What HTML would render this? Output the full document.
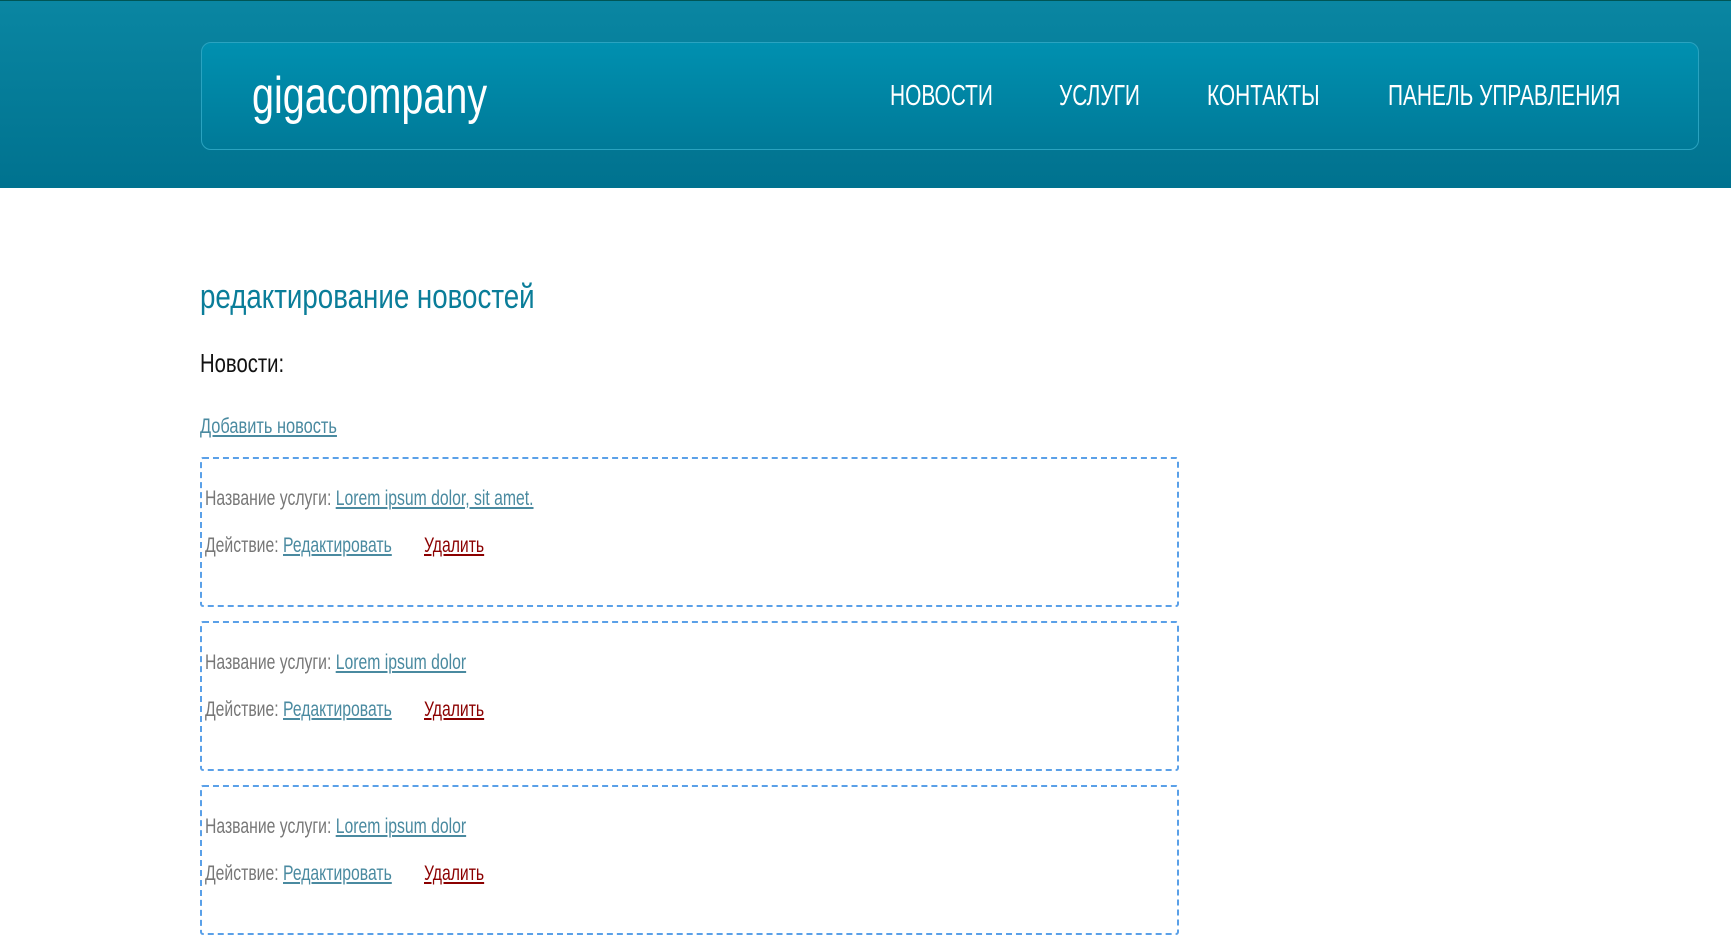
<!DOCTYPE html>
<html><head><meta charset="utf-8"><style>
body{margin:0;width:1731px;height:941px;overflow:hidden;background:#fff;font-family:"Liberation Sans",sans-serif}
.hdr{position:absolute;left:0;top:0;width:1731px;height:187px;background:linear-gradient(#0a86a2,#00728f);border-top:1px solid #055}
.box{position:absolute;left:201px;top:41px;width:1496px;height:106px;border:1px solid #2aa3c0;border-radius:10px;background:linear-gradient(#0090b0,#007a98)}
.c{position:absolute;white-space:nowrap;transform:scaleX(.78);transform-origin:left center}
.logo{left:252px;top:66px;font-size:52px;color:#fff;transform:scaleX(.76)}
.nav{top:80px;font-size:29px;color:#fff;transform:scaleX(.72)}
h1{position:absolute;left:200px;top:278px;margin:0;font-weight:normal;font-size:34px;color:#0a7d99;white-space:nowrap;transform:scaleX(.815);transform-origin:left}
.n{left:200px;top:348px;font-size:26px;color:#111}
a{color:#4a8aa0;text-decoration:underline}
.add{left:200px;top:415px;font-size:21px}
.item{position:absolute;left:200px;width:975px;height:146px;border:2px dashed #5aa0e8;border-radius:3px}
.l{font-size:21px;color:#777;left:3px;transform:scaleX(.75)}
.red{color:#8b0000}
</style></head><body>
<div class="hdr"><div class="box"></div></div>
<div class="c logo">gigacompany</div>
<div class="c nav" style="left:890px">НОВОСТИ</div>
<div class="c nav" style="left:1059px">УСЛУГИ</div>
<div class="c nav" style="left:1207px">КОНТАКТЫ</div>
<div class="c nav" style="left:1388px">ПАНЕЛЬ УПРАВЛЕНИЯ</div>
<h1>редактирование новостей</h1>
<div class="c n">Новости:</div>
<div class="c add"><a>Добавить новость</a></div>

<div class="item" style="top:457px">
<div class="c l" style="top:28px">Название услуги: <a>Lorem ipsum dolor, sit amet.</a></div>
<div class="c l" style="top:75px">Действие: <a>Редактировать</a></div>
<div class="c l" style="top:75px;left:222px"><a class="red">Удалить</a></div>
</div>
<div class="item" style="top:621px">
<div class="c l" style="top:28px">Название услуги: <a>Lorem ipsum dolor</a></div>
<div class="c l" style="top:75px">Действие: <a>Редактировать</a></div>
<div class="c l" style="top:75px;left:222px"><a class="red">Удалить</a></div>
</div>
<div class="item" style="top:785px">
<div class="c l" style="top:28px">Название услуги: <a>Lorem ipsum dolor</a></div>
<div class="c l" style="top:75px">Действие: <a>Редактировать</a></div>
<div class="c l" style="top:75px;left:222px"><a class="red">Удалить</a></div>
</div>
</body></html>
